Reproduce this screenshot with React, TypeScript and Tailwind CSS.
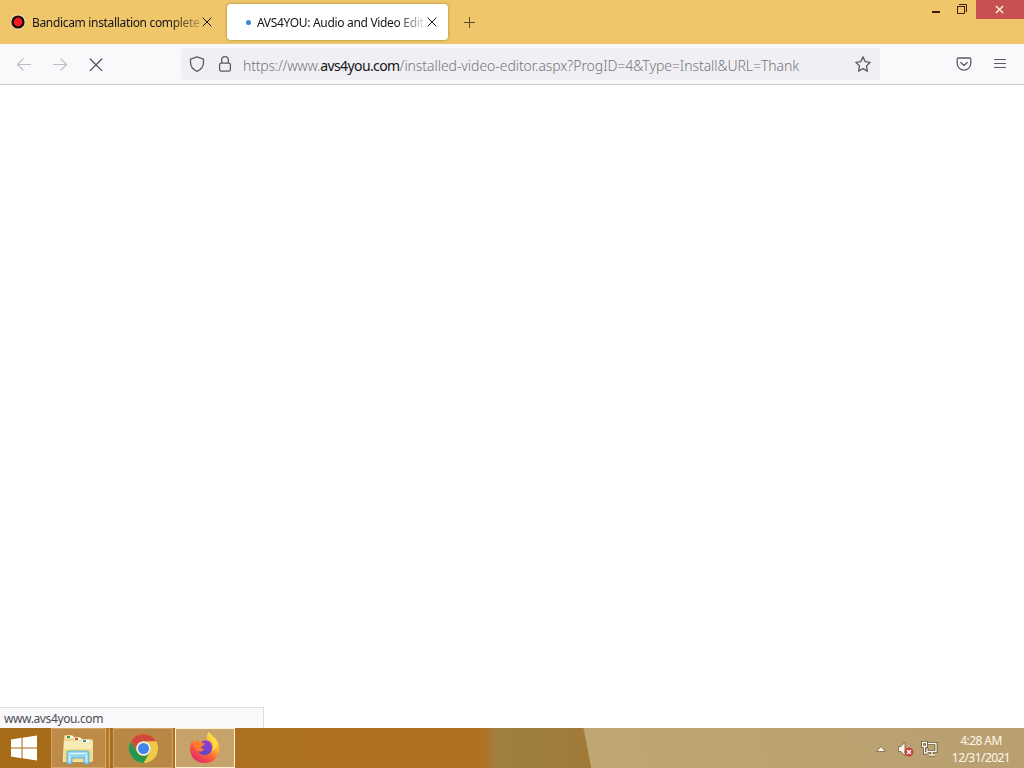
import type { ReactNode } from "react";

function CloseIcon({ className }: { className?: string }) {
  return (
    <svg viewBox="0 0 10 10" className={className} fill="none" stroke="currentColor" strokeLinecap="round">
      <path d="M1 1l8 8M9 1L1 9" />
    </svg>
  );
}

function TabStrip() {
  return (
    <div className="flex h-11 bg-[#efc76a] text-[#15141a]">
      <div className="flex h-11 w-[223px] items-center pl-[11px]">
        <svg viewBox="0 0 16 16" className="size-4 shrink-0">
          <circle cx="7" cy="8" r="7.6" fill="#f7e2b0" />
          <circle cx="7" cy="8" r="6.6" fill="#160a0c" />
          <circle cx="7" cy="8" r="4.4" fill="#f01c22" />
        </svg>
        <span className="ml-[5px] w-[168px] pt-[2px] whitespace-nowrap text-[12px] tracking-[-0.33px] [mask-image:linear-gradient(to_right,black_82%,transparent_106%)]">
          Bandicam installation complete
        </span>
        <CloseIcon className="ml-[2px] size-[10px]" />
      </div>
      <div className="mt-[4px] ml-[4px] flex h-9 w-[221px] items-center rounded-[4px] bg-white shadow-[0_0_3px_rgba(90,60,0,0.5)]">
        <span className="ml-[19px] size-[5px] rounded-full bg-[#3689d8]" />
        <span className="ml-[6px] w-[168px] pt-[2px] whitespace-nowrap text-[12px] tracking-[-0.32px] [mask-image:linear-gradient(to_right,black_83%,transparent_102%)]">
          AVS4YOU: Audio and Video Edit
        </span>
        <CloseIcon className="ml-[2px] size-[10px]" />
      </div>
      <svg viewBox="0 0 12 12" className="mt-[17px] ml-4 size-3" fill="none" stroke="#5f4a32">
        <path d="M5.5 0v11M0 5.5h11" />
      </svg>
      <div className="ml-auto flex h-[19px]">
        <svg viewBox="0 0 46 19" className="h-[19px] w-[46px]" fill="none" stroke="#3c1d0c">
          <path d="M2 12h8" strokeWidth="2" />
          <path d="M27.5 6.5h7v7h-7zM27 6.5h8" />
          <path d="M29 4.5h7.5v7.5" />
        </svg>
        <div className="flex w-12 items-center justify-center bg-[#c75050] pr-[2px] text-[#fff3df]">
          <svg viewBox="0 0 10 10" className="size-[9px]" fill="none" stroke="currentColor" strokeWidth="1.5">
            <path d="M1 1l8 8M9 1L1 9" />
          </svg>
        </div>
      </div>
    </div>
  );
}

function Toolbar() {
  return (
    <div className="flex h-[41px] items-center border-b border-[#cccccf] bg-[#f9f9fb] text-[#5b5b66]">
      <svg viewBox="0 0 16 16" className="ml-4 size-4 text-[#bdbdc2]" fill="none" stroke="currentColor" strokeWidth="1.2" strokeLinecap="round" strokeLinejoin="round">
        <path d="M14.5 8.5H1.5M7 3L1.5 8.5 7 14" />
      </svg>
      <svg viewBox="0 0 16 16" className="ml-5 size-4 text-[#bdbdc2]" fill="none" stroke="currentColor" strokeWidth="1.2" strokeLinecap="round" strokeLinejoin="round">
        <path d="M1.5 8.5h13M9 3l5.5 5.5L9 14" />
      </svg>
      <svg viewBox="0 0 16 16" className="ml-5 size-4" fill="none" stroke="#4b4b53" strokeWidth="1.2" strokeLinecap="round">
        <path d="M2.2 3l11.6 11.6M13.8 3L2.2 14.6" />
      </svg>
      <div className="ml-[77px] flex h-8 w-[699px] items-center rounded-[4px] bg-[#f0f0f4]">
        <svg viewBox="0 0 16 16" className="ml-2 size-4" fill="none" stroke="currentColor" strokeWidth="1.3" strokeLinejoin="round">
          <path d="M8 .8l6.5 2.3v3.1c0 4.2-2 7.3-6.5 9.2C3.5 13.5 1.5 10.4 1.5 6.2V3.1z" />
        </svg>
        <svg viewBox="0 0 16 16" className="ml-3 size-4" fill="none" stroke="currentColor" strokeWidth="1.3">
          <rect x="2.6" y="7.2" width="10.8" height="8" rx="1.6" />
          <path d="M4.7 7V4a3.3 3.3 0 0 1 6.6 0v3" />
        </svg>
        <span className="ml-[10px] w-[612px] pt-[3px] whitespace-nowrap text-[14px] font-light text-[#75757c]">
          <span className="tracking-[-0.21px]">https://www.</span>
          <span className="font-normal tracking-[-0.6px] text-[#15141a]">avs4you.com</span>
          <span className="tracking-[-0.06px]">/installed-video-editor.aspx?ProgID=4&amp;Type=Install&amp;URL=Thank</span>
        </span>
        <svg viewBox="0 0 16 16" className="size-4 shrink-0" fill="none" stroke="currentColor" strokeWidth="1.3" strokeLinejoin="round">
          <path d="M8 .9l2.2 4.7 5 .7-3.7 3.6.9 5.2L8 12.6l-4.4 2.5.9-5.2L.8 6.3l5-.7z" />
        </svg>
      </div>
      <svg viewBox="0 0 16 16" className="ml-[76px] size-4" fill="none" stroke="currentColor" strokeWidth="1.3" strokeLinecap="round" strokeLinejoin="round">
        <path d="M2.5 2h11c.8 0 1.3.5 1.3 1.3v4a6.8 6.8 0 0 1-13.6 0v-4C1.2 2.5 1.7 2 2.5 2z" />
        <path d="M4.8 6.5L8 9.5l3.2-3" />
      </svg>
      <svg viewBox="0 0 16 16" className="ml-5 size-4" fill="none" stroke="currentColor" strokeLinecap="round">
        <path d="M2.5 3.5h11M2.5 7.5h11M2.5 11.5h11" />
      </svg>
    </div>
  );
}

function TaskButton({ className, children }: { className: string; children: ReactNode }) {
  return <div className={`flex h-10 items-center justify-center border ${className}`}>{children}</div>;
}

function ExplorerIcon() {
  return (
    <svg viewBox="0 0 32 32" className="mt-px size-8">
      <path d="M2 4q0-2 2-2h6l2 2h6l2 2h9q2 0 2 2v20H1z" fill="#ead994" />
      <path d="M2 8h29l-1 21H1z" fill="#f7ebb5" />
      <path d="M2 16h28v12H2z" fill="#f1dc8b" />
      <path d="M4 3h7v2H4z" fill="#fff" />
      <path d="M5 3h3v2H5z" fill="#389b42" />
      <path d="M12 5h7v2h-7z" fill="#fff" />
      <path d="M13 5h3v2h-3z" fill="#d44b35" />
      <path d="M20 7h7v2h-7z" fill="#fff" />
      <path d="M21 7h3v2h-3z" fill="#2e91c8" />
      <path d="M5 31V20q0-2 2-2h18q2 0 2 2v11h-5v-6H10v6z" fill="#91d4ee" stroke="#4da7d1" strokeWidth=".8" />
      <path d="M7.5 20.5h17M7.5 22v7M24.5 22v7" stroke="#daf5fa" strokeWidth="1.3" />
    </svg>
  );
}

function ChromeIcon() {
  return (
    <svg viewBox="0 0 32 32" className="size-[31px]">
      <circle cx="16" cy="16" r="15" fill="#efca4a" />
      <path d="M3 8.5A15 15 0 0 1 29 8.5H16a7.5 7.5 0 0 0-6.5 11.3z" fill="#d3483c" />
      <path d="M3 8.5l6.5 11.3a7.5 7.5 0 0 0 13 0L16 31A15 15 0 0 1 3 8.5z" fill="#27964d" />
      <circle cx="16" cy="16" r="7.3" fill="#f4f2ec" />
      <circle cx="16" cy="16" r="5.7" fill="#4285e8" />
    </svg>
  );
}

function FirefoxIcon() {
  return (
    <svg viewBox="0 0 32 32" className="size-8">
      <defs>
        <linearGradient id="flame" x1=".85" y1=".05" x2=".25" y2=".95">
          <stop offset="0" stopColor="#ffe64d" />
          <stop offset=".35" stopColor="#ffb52e" />
          <stop offset=".65" stopColor="#fb603c" />
          <stop offset="1" stopColor="#e52b68" />
        </linearGradient>
        <linearGradient id="globe" x1=".8" y1="0" x2=".3" y2="1">
          <stop offset="0" stopColor="#9b3bd5" />
          <stop offset="1" stopColor="#554bc3" />
        </linearGradient>
      </defs>
      <path d="M20 0c2 3 6 5 8.5 9.5C33 19 28 31 16 31 7 31 1 25 1 17c0-4 1.5-7 3.5-9.5L5 11l3-3c1 1 2 1.3 4 1.3 2-2 4-2 6-1C17 5 18 2 20 0z" fill="url(#flame)" />
      <path d="M12 10c3-3 8-2 10 1 3 5 0 12-6 12-4 0-6-2-7-5 2 1 4 1 6-1-2 0-3-1-2.5-2.5L16 13c-1-1-3-1-4-3z" fill="url(#globe)" />
      <path d="M4 8l1 3 3-3c1 2 4 2 8 3-1 2-5 2-5 4s2 3 4 2c-2 4-7 3-9-1-2-2-3-5-2-8z" fill="#ff7933" />
      <path d="M20 1c-1 4 3 6 4 10 1 3 0 6-1 8 4-2 6-6 5-10-2-3-6-5-8-8z" fill="#ffdc46" />
    </svg>
  );
}

function TrayIcons() {
  return (
    <svg viewBox="0 0 70 20" className="mt-px h-5 w-[70px]">
      <path d="M4.5 12.5l4.5-5 4.5 5z" fill="#fff6e5" stroke="#7b6549" strokeWidth=".8" />
      <path d="M26.5 7.5h2.5l4-4.5v14l-4-4.5h-2.5z" fill="#fff8e8" stroke="#716047" strokeWidth=".8" />
      <path d="M35.5 5q3 3 2 7" fill="none" stroke="#cfb891" />
      <circle cx="37" cy="13" r="4.5" fill="#c93e3b" />
      <path d="M35 11l4 4M39 11l-4 4" stroke="#fff" strokeWidth="1.4" />
      <g fill="none" stroke="#66533a" strokeWidth="3">
        <path d="M56 4.5h8v8h-9v-3M60 13v3M57 16h6M50.5 3.5h4v4h-4zM52.5 8v6h3" />
      </g>
      <g fill="none" stroke="#fff8e8" strokeWidth="1.3">
        <path d="M56 4.5h8v8h-9v-3M60 13v3M57 16h6M50.5 3.5h4v4h-4zM52.5 8v6h3" />
      </g>
    </svg>
  );
}

function Taskbar() {
  return (
    <div className="flex h-10 bg-[linear-gradient(79deg,transparent_57.25%,#bea772_57.35%,#b99f71_100%),linear-gradient(90deg,#a66b17_0%,#ae7021_26%,#b07123_47.2%,#9e803d_48.5%,#a17a38_57.5%)]">
      <div className="flex w-[51px] items-center pl-[10px]">
        <svg viewBox="0 0 28 26" className="h-[26px] w-7" fill="#fff">
          <path d="M1 4.5l10.5-1.7v9.7H1zM12.5 2.7L27 .5v12H12.5zM1 13.5h10.5v9.7L1 21.5zM12.5 13.5H27v12l-14.5-2.2z" />
        </svg>
      </div>
      <TaskButton className="w-[55px] border-[#d1a765] bg-[#bd8b47] pr-[2px]">
        <ExplorerIcon />
      </TaskButton>
      <div className="mr-[3px] w-[4px] border-r border-[#d1a765] bg-[#b37c31]" />
      <TaskButton className="w-[60px] border-[#d1a765] bg-[#b88743]">
        <ChromeIcon />
      </TaskButton>
      <TaskButton className="ml-[2px] w-[60px] border-[#fff1d4] bg-[#c7a36c]">
        <FirefoxIcon />
      </TaskButton>
      <div className="ml-auto flex items-center text-[#fff8e8]">
        <TrayIcons />
        <div className="w-[82px] pt-px pr-[4px] text-center text-[12px] leading-[17px] tracking-[-0.55px]">
          <div>4:28 AM</div>
          <div>12/31/2021</div>
        </div>
      </div>
    </div>
  );
}

export default function App() {
  return (
    <div className="flex h-[768px] w-[1024px] flex-col overflow-hidden bg-white font-['Noto_Sans','Open_Sans',sans-serif]">
      <TabStrip />
      <Toolbar />
      <main className="flex flex-1 items-end bg-white">
        <div className="flex h-[21px] w-[264px] items-center border-t border-r border-[#dedee1] bg-[#f9f9fb] pt-[2px] pl-1 text-[12px] tracking-[-0.38px] text-[#4c4c52]">
          www.avs4you.com
        </div>
      </main>
      <Taskbar />
    </div>
  );
}
